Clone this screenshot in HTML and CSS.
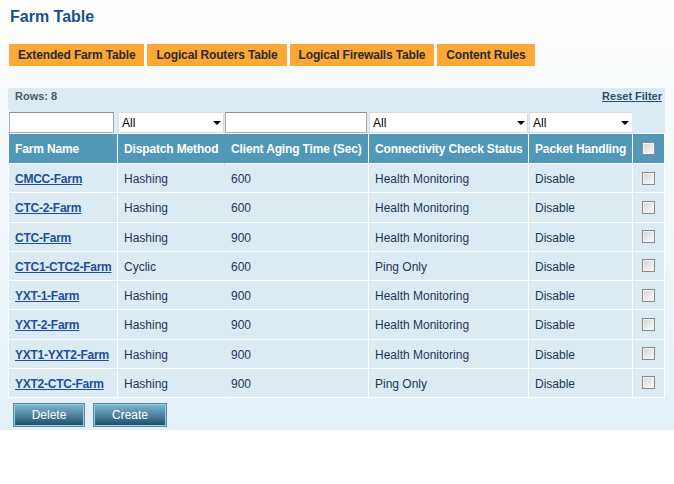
FILE: index.html
```html
<!DOCTYPE html>
<html>
<head>
<meta charset="utf-8">
<link rel="stylesheet" href="styles.css">
</head>
<body>
<div class="page">
  <h1 class="title">Farm Table</h1>
  <nav class="tabs">
    <a class="tab">Extended Farm Table</a>
    <a class="tab">Logical Routers Table</a>
    <a class="tab">Logical Firewalls Table</a>
    <a class="tab">Content Rules</a>
  </nav>
  <div class="grid">
    <div class="rowsbar"><span class="rows">Rows: 8</span><a class="reset">Reset Filter</a></div>
    <table class="farm">
      <tr class="filters">
        <td class="c1"><input class="txt w1" type="text"></td>
        <td class="c2"><span class="sel"><select class="w2"><option>All</option></select></span></td>
        <td class="c3"><input class="txt w3" type="text"></td>
        <td class="c4"><span class="sel"><select class="w4"><option>All</option></select></span></td>
        <td class="c5"><span class="sel"><select class="w5"><option>All</option></select></span></td>
        <td class="c6"></td>
      </tr>
      <tr class="head">
        <th>Farm Name</th>
        <th class="nosep">Dispatch Method</th>
        <th>Client Aging Time (Sec)</th>
        <th>Connectivity Check Status</th>
        <th>Packet Handling</th>
        <th class="chk"><input type="checkbox" class="cb"></th>
      </tr>
      <tr><td><a class="link">CMCC-Farm</a></td><td class="nosep">Hashing</td><td>600</td><td>Health Monitoring</td><td>Disable</td><td class="chk"><input type="checkbox" class="cb"></td></tr>
      <tr><td><a class="link">CTC-2-Farm</a></td><td class="nosep">Hashing</td><td>600</td><td>Health Monitoring</td><td>Disable</td><td class="chk"><input type="checkbox" class="cb"></td></tr>
      <tr><td><a class="link">CTC-Farm</a></td><td class="nosep">Hashing</td><td>900</td><td>Health Monitoring</td><td>Disable</td><td class="chk"><input type="checkbox" class="cb"></td></tr>
      <tr><td><a class="link">CTC1-CTC2-Farm</a></td><td class="nosep">Cyclic</td><td>600</td><td>Ping Only</td><td>Disable</td><td class="chk"><input type="checkbox" class="cb"></td></tr>
      <tr><td><a class="link">YXT-1-Farm</a></td><td class="nosep">Hashing</td><td>900</td><td>Health Monitoring</td><td>Disable</td><td class="chk"><input type="checkbox" class="cb"></td></tr>
      <tr><td><a class="link">YXT-2-Farm</a></td><td class="nosep">Hashing</td><td>900</td><td>Health Monitoring</td><td>Disable</td><td class="chk"><input type="checkbox" class="cb"></td></tr>
      <tr><td><a class="link">YXT1-YXT2-Farm</a></td><td class="nosep">Hashing</td><td>900</td><td>Health Monitoring</td><td>Disable</td><td class="chk"><input type="checkbox" class="cb"></td></tr>
      <tr><td><a class="link">YXT2-CTC-Farm</a></td><td class="nosep">Hashing</td><td>900</td><td>Ping Only</td><td>Disable</td><td class="chk"><input type="checkbox" class="cb"></td></tr>
    </table>
  </div>
  <div class="actions">
    <button class="btn b-del">Delete</button>
    <button class="btn b-create">Create</button>
  </div>
</div>
</body>
</html>
```
FILE: styles.css
```css
html, body {
  margin: 0;
  padding: 0;
  background: #ffffff;
}
body {
  font-family: "Liberation Sans", Arial, sans-serif;
}
.page {
  height: 430px;
  box-sizing: border-box;
  padding: 8px 0 0 8px;
  background: linear-gradient(to bottom, #ffffff 0%, #f6fafd 30%, #e4f0f8 100%);
}
.title {
  margin: 0 0 0 2px;
  font-size: 16px;
  line-height: 18px;
  font-weight: bold;
  color: #1a4e92;
}
.tabs {
  display: flex;
  gap: 3px;
  margin: 18px 0 0 1px;
}
.tab {
  display: block;
  height: 22px;
  line-height: 22px;
  padding: 0 9px;
  background: #fca836;
  color: #2b2b2b;
  font-size: 12px;
  font-weight: bold;
  letter-spacing: -0.16px;
}
.grid {
  margin-top: 22px;
  width: 657px;
  background: #dcebf3;
}
.rowsbar {
  display: flex;
  justify-content: space-between;
  height: 22px;
  box-sizing: border-box;
  padding: 2px 3px 0 7px;
  font-size: 11px;
  line-height: 13px;
  font-weight: bold;
}
.rows { color: #4d5a66; }
.reset {
  color: #2e4f6f;
  text-decoration: underline;
}
.farm {
  border-collapse: separate;
  border-spacing: 0;
  table-layout: fixed;
  width: 657px;
  border-left: 1px solid #ffffff;
  box-sizing: border-box;
  font-size: 12px;
}
.farm td, .farm th {
  box-sizing: border-box;
  padding: 0 6px;
  border-right: 1px solid #ffffff;
  border-bottom: 1px solid #ffffff;
  text-align: left;
  white-space: nowrap;
  overflow: hidden;
}
.farm td {
  height: 29.25px;
  padding-top: 2px;
  background: #dcebf3;
  color: #1f3553;
}
.filters td {
  height: 24px;
  padding: 2px 0 0 0;
  vertical-align: top;
  border-right-color: transparent;
}
.filters .c1 { width: 109px; }
.filters .c2 { width: 107px; }
.filters .c3 { width: 144px; }
.filters .c4 { width: 160px; }
.filters .c5 { width: 104px; }
.filters .c6 { width: 32px; }
.farm .nosep { border-right-color: transparent; }
.head th {
  height: 30px;
  background: #5097b8;
  color: #ffffff;
  font-weight: bold;
  font-size: 12px;
  letter-spacing: -0.15px;
}
.farm .chk {
  text-align: center;
  padding: 0;
}
.link {
  color: #1d4f9c;
  font-weight: bold;
  text-decoration: underline;
  letter-spacing: -0.25px;
}
.txt {
  display: block;
  box-sizing: border-box;
  height: 21px;
  margin: 0;
  border: 1px solid #a8acb2;
  border-top-color: #8e9297;
  background: #ffffff;
}
.w1 { width: 105px; }
.w3 { width: 142px; }
.sel {
  position: relative;
  display: block;
}
.sel::after {
  content: "";
  position: absolute;
  right: 3px;
  top: 9px;
  border-left: 4px solid transparent;
  border-right: 4px solid transparent;
  border-top: 4px solid #000000;
  pointer-events: none;
}
select {
  -webkit-appearance: none;
  appearance: none;
  display: block;
  box-sizing: border-box;
  height: 21px;
  margin: 0;
  padding: 0 0 0 3px;
  border: 1px solid #d9dcdf;
  border-radius: 2px;
  background: #ffffff;
  color: #000000;
  font-family: "Liberation Sans", Arial, sans-serif;
  font-size: 12px;
}
.w2 { width: 106px; }
.w4 { width: 159px; }
.w5 { width: 104px; }
.cb {
  -webkit-appearance: none;
  appearance: none;
  display: block;
  width: 13px;
  height: 13px;
  margin: 0 auto;
  box-sizing: border-box;
  border: 1px solid #8c8c8c;
  box-shadow: inset 0 0 0 1px #f4f4f4;
  background: linear-gradient(135deg, #d2d2d2 0%, #ececec 60%, #fbfbfb 100%);
}
.actions {
  display: flex;
  gap: 10px;
  margin: 6px 0 0 6px;
}
.btn {
  box-sizing: border-box;
  height: 22px;
  margin: 0;
  padding: 0;
  border: 1px solid #92cde8;
  outline: 1px solid #5a8aa3;
  outline-offset: 0;
  background: linear-gradient(to bottom, #7cb1cd 0%, #4f85a2 50%, #234f66 100%);
  color: #ffffff;
  font-family: "Liberation Sans", Arial, sans-serif;
  font-size: 12px;
  line-height: 20px;
}
.b-del { width: 70px; }
.b-create { width: 72px; }
```
